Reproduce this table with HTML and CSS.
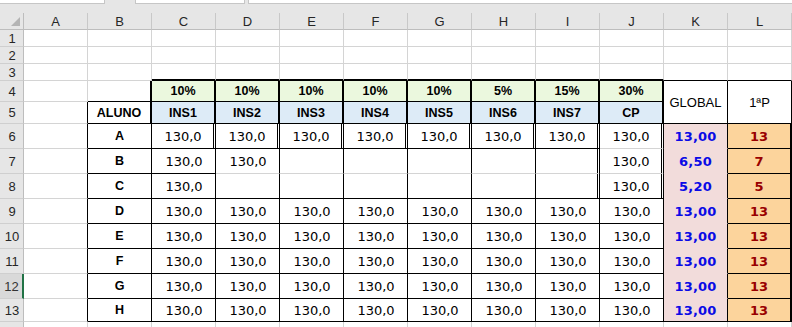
FILE: index.html
```html
<!DOCTYPE html>
<html lang="pt">
<head>
<meta charset="utf-8">
<title>Planilha</title>
<link rel="stylesheet" href="styles.css">
</head>
<body>
<div class="bar">
  <div class="box box1"></div>
  <div class="box box2"></div>
  <div class="box box3"></div>
</div>
<div class="sheet">
  <div class="cn"><svg width="23" height="17" viewBox="0 0 23 17"><polygon points="20,4 20,13 11,13" fill="#b4b4b4"/></svg></div>
  <div class="ch">A</div><div class="ch">B</div><div class="ch">C</div><div class="ch">D</div><div class="ch">E</div><div class="ch">F</div><div class="ch">G</div><div class="ch">H</div><div class="ch">I</div><div class="ch">J</div><div class="ch">K</div><div class="ch">L</div>

  <div class="rh">1</div><div class="c"></div><div class="c"></div><div class="c"></div><div class="c"></div><div class="c"></div><div class="c"></div><div class="c"></div><div class="c"></div><div class="c"></div><div class="c"></div><div class="c"></div><div class="c"></div>

  <div class="rh">2</div><div class="c"></div><div class="c"></div><div class="c"></div><div class="c"></div><div class="c"></div><div class="c"></div><div class="c"></div><div class="c"></div><div class="c"></div><div class="c"></div><div class="c"></div><div class="c"></div>

  <div class="rh">3</div><div class="c"></div><div class="c"></div><div class="c b2"></div><div class="c b2"></div><div class="c b2"></div><div class="c b2"></div><div class="c b2"></div><div class="c b2"></div><div class="c b2"></div><div class="c b2"></div><div class="c b1"></div><div class="c b1"></div>

  <div class="rh">4</div><div class="c"></div><div class="c r2 b1"></div>
  <div class="c g lb r2 b1">10%</div><div class="c g lb r2 b1">10%</div><div class="c g lb r2 b1">10%</div><div class="c g lb r2 b1">10%</div><div class="c g lb r2 b1">10%</div><div class="c g lb r2 b1">5%</div><div class="c g lb r2 b1">15%</div><div class="c g lb r2 b1">30%</div>
  <div class="c m tx r1 b1">GLOBAL</div><div class="c m tx r1 b1">1ªP</div>

  <div class="rh">5</div><div class="c r1"></div><div class="c lb r2 b1">ALUNO</div>
  <div class="c bl lb r2 b1">INS1</div><div class="c bl lb r2 b1">INS2</div><div class="c bl lb r2 b1">INS3</div><div class="c bl lb r2 b1">INS4</div><div class="c bl lb r2 b1">INS5</div><div class="c bl lb r2 b1">INS6</div><div class="c bl lb r2 b1">INS7</div><div class="c bl lb r2 b1">CP</div>

  <div class="rh">6</div><div class="c r1"></div><div class="c lb r1 b1">A</div>
  <div class="c n rd b1">130,0</div><div class="c n rd b1">130,0</div><div class="c n rd b1">130,0</div><div class="c n rd b1">130,0</div><div class="c n rd b1">130,0</div><div class="c n rd b1">130,0</div><div class="c n rd b1">130,0</div><div class="c n rd">130,0</div>
  <div class="c pk gb r1 bp">13,00</div><div class="c or nr r2 b1">13</div>

  <div class="rh">7</div><div class="c r1"></div><div class="c lb r1 b1">B</div>
  <div class="c n r1 b1">130,0</div><div class="c n r1">130,0</div><div class="c r1"></div><div class="c r1"></div><div class="c r1"></div><div class="c r1"></div><div class="c rd"></div><div class="c n rd">130,0</div>
  <div class="c pk gb r1 bp">6,50</div><div class="c or nr r2 b1">7</div>

  <div class="rh">8</div><div class="c r1"></div><div class="c lb r1 b1">C</div>
  <div class="c n r1 b1">130,0</div><div class="c r1 b1"></div><div class="c r1 b1"></div><div class="c r1 b1"></div><div class="c r1 b1"></div><div class="c r1 b1"></div><div class="c rd b1"></div><div class="c n rd b1">130,0</div>
  <div class="c pk gb r1 bp">5,20</div><div class="c or nr r2 b1">5</div>

  <div class="rh">9</div><div class="c r1"></div><div class="c lb r1 b1">D</div>
  <div class="c n r1 b1">130,0</div><div class="c n r1 b1">130,0</div><div class="c n r1 b1">130,0</div><div class="c n r1 b1">130,0</div><div class="c n r1 b1">130,0</div><div class="c n r1 b1">130,0</div><div class="c n r1 b1">130,0</div><div class="c n r1 b1">130,0</div>
  <div class="c pk gb r1 bp">13,00</div><div class="c or nr r2 b1">13</div>

  <div class="rh">10</div><div class="c r1"></div><div class="c lb r1 b1">E</div>
  <div class="c n r1 b1">130,0</div><div class="c n r1 b1">130,0</div><div class="c n r1 b1">130,0</div><div class="c n r1 b1">130,0</div><div class="c n r1 b1">130,0</div><div class="c n r1 b1">130,0</div><div class="c n r1 b1">130,0</div><div class="c n r1 b1">130,0</div>
  <div class="c pk gb r1 bp">13,00</div><div class="c or nr r2 b1">13</div>

  <div class="rh">11</div><div class="c r1"></div><div class="c lb r1 b1">F</div>
  <div class="c n r1 b1">130,0</div><div class="c n r1 b1">130,0</div><div class="c n r1 b1">130,0</div><div class="c n r1 b1">130,0</div><div class="c n r1 b1">130,0</div><div class="c n r1 b1">130,0</div><div class="c n r1 b1">130,0</div><div class="c n r1 b1">130,0</div>
  <div class="c pk gb r1 bp">13,00</div><div class="c or nr r2 b1">13</div>

  <div class="rh sel">12</div><div class="c r1"></div><div class="c lb r1 b1">G</div>
  <div class="c n r1 b1">130,0</div><div class="c n r1 b1">130,0</div><div class="c n r1 b1">130,0</div><div class="c n r1 b1">130,0</div><div class="c n r1 b1">130,0</div><div class="c n r1 b1">130,0</div><div class="c n r1 b1">130,0</div><div class="c n r1 b1">130,0</div>
  <div class="c pk gb r1 bp">13,00</div><div class="c or nr r2 b1">13</div>

  <div class="rh">13</div><div class="c r1"></div><div class="c lb r1 b1">H</div>
  <div class="c n r1 b1">130,0</div><div class="c n r1 b1">130,0</div><div class="c n r1 b1">130,0</div><div class="c n r1 b1">130,0</div><div class="c n r1 b1">130,0</div><div class="c n r1 b1">130,0</div><div class="c n r1 b1">130,0</div><div class="c n r1 b1">130,0</div>
  <div class="c pk gb r1 b1">13,00</div><div class="c or nr r2 b1">13</div>

  <div class="rh">14</div><div class="c"></div><div class="c"></div><div class="c"></div><div class="c"></div><div class="c"></div><div class="c"></div><div class="c"></div><div class="c"></div><div class="c"></div><div class="c"></div><div class="c"></div><div class="c"></div>
</div>
</body>
</html>
```
FILE: styles.css
```css
html, body {
  margin: 0;
  padding: 0;
  background: #ffffff;
  overflow: hidden;
  width: 792px;
  height: 327px;
}

.bar {
  height: 13px;
  background: #e6e6e6;
  display: flex;
  align-items: flex-start;
  box-sizing: border-box;
}

.box {
  height: 4px;
  background: #ffffff;
  box-sizing: border-box;
  border-bottom: 1px solid #c6c6c6;
  border-right: 1px solid #c6c6c6;
}
.box1 { width: 105px; }
.box2 { width: 110px; margin-left: 30px; border-left: 1px solid #c6c6c6; }
.box3 { flex: 1; margin-left: 3px; border-left: 1px solid #c6c6c6; border-right: none; }

.sheet {
  display: grid;
  grid-template-columns: 24px repeat(12, 64px);
  grid-template-rows: 17px 17px 17px 17px 21px 22px repeat(7, 25px) 23px 20px;
}

.cn, .ch, .rh, .c {
  box-sizing: border-box;
  display: flex;
  align-items: center;
  justify-content: center;
  overflow: hidden;
  white-space: nowrap;
}

.cn {
  background: #e6e6e6;
  border-right: 1px solid #bdbdbd;
  border-bottom: 1px solid #bdbdbd;
  align-items: flex-start;
  justify-content: flex-start;
}
.cn svg { display: block; }

.ch {
  background: #e6e6e6;
  border-right: 1px solid #c8c8c8;
  border-bottom: 1px solid #bdbdbd;
  font-family: "Liberation Sans", Arial, sans-serif;
  font-size: 13px;
  color: #262626;
  padding-top: 1px;
}

.rh {
  background: #e6e6e6;
  border-right: 1px solid #bdbdbd;
  border-bottom: 1px solid #cfcfcf;
  font-family: "Liberation Sans", Arial, sans-serif;
  font-size: 13px;
  color: #262626;
  padding-left: 1px;
}
.rh.sel {
  background: #d9d9d9;
  border-right: 2px solid #217346;
  color: #333333;
}

.c {
  border-right: 1px solid #d4d4d4;
  border-bottom: 1px solid #d4d4d4;
  font-family: "DejaVu Sans", Verdana, sans-serif;
  font-size: 13px;
  color: #000000;
}

/* borders */
.r1 { border-right: 1px solid #000000; }
.r2 { border-right: 2px solid #000000; }
.rd { border-right: 3px double #000000; }
.b1 { border-bottom: 1px solid #000000; }
.b2 { border-bottom: 2px solid #000000; }
.bp { border-bottom-color: #f2dcdb; }

/* merged cells */
.m { grid-row: span 2; }

/* fills */
.g { background: #ebf8de; }
.bl { background: #ddebf7; }
.pk { background: #f2dcdb; }
.or { background: #fcd49c; }

/* text */
.lb {
  font-family: "Liberation Sans", Arial, sans-serif;
  font-weight: bold;
  font-size: 12.5px;
}
.tx {
  font-family: "Liberation Sans", Arial, sans-serif;
  font-size: 13px;
}
.n { padding-left: 1px; }
.gb {
  font-weight: bold;
  color: #0a0ae6;
  letter-spacing: 0.2px;
}
.nr {
  font-weight: bold;
  color: #990000;
}
```
